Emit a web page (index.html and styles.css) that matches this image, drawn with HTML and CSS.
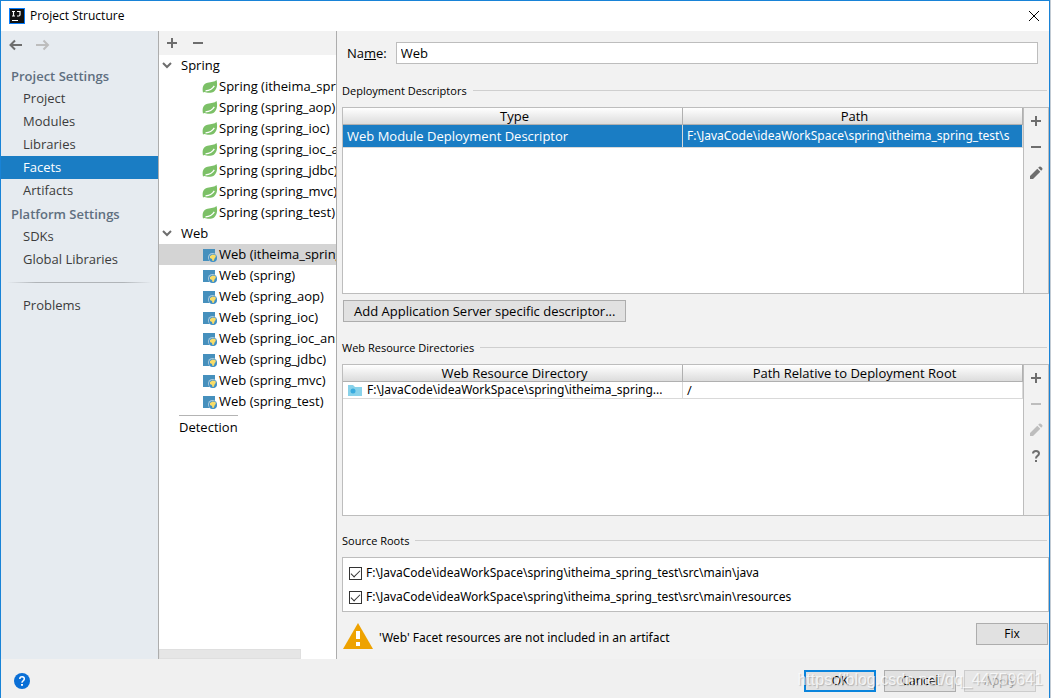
FILE: index.html
```html
<!DOCTYPE html>
<html lang="en">
<head>
<meta charset="utf-8">
<title>Project Structure</title>
<link rel="stylesheet" href="styles.css">
</head>
<body>
<svg class="defs" aria-hidden="true">
  <symbol id="leaf" viewBox="0 0 16 16"><path fill="#7cc067" d="M1 14.500C0 9.500 1 6 5.500 4.800 9.500 4 12.500 4 14.500 2c1 3.500 1 8.200-1.900 10.900C9.800 15.500 5 15 2.500 14z"/><path fill="none" stroke="#fff" stroke-width="1.300" d="M3.500 12.800c4-.2 6.800-1.700 8.800-5"/></symbol>
  <symbol id="web" viewBox="0 0 16 16"><path fill="#4690bd" d="M1 3h12v12H1z"/><circle cx="10.500" cy="11.500" r="4.500" fill="#a9c9dc"/><circle cx="11" cy="12" r="4" fill="#3f8fc6"/><path fill="#f8dc68" d="M8 10l2.500-1.500 3 .5.300 2-1 1-1 2.800-1.300.2-.5-2L8 12z"/></symbol>
  <symbol id="plus" viewBox="0 0 16 16"><path fill="currentColor" d="M7 3h2v4h4v2H9v4H7V9H3V7h4z"/></symbol>
  <symbol id="minus" viewBox="0 0 16 16"><path fill="currentColor" d="M3 7h10v2H3z"/></symbol>
  <symbol id="pencil" viewBox="0 0 16 16"><path fill="currentColor" d="M2 11L9.300 3.700l3 3L5 14H2zM10.200 2.800l1-1q1-.8 2 .1l1 1q.8 1-.1 1.900l-.9.900z"/></symbol>
  <symbol id="chevron" viewBox="0 0 16 16"><path fill="none" stroke="#6e6e6e" stroke-width="2" d="M4 6l4 4 4-4"/></symbol>
</svg>
<div class="window">
  <header class="titlebar">
    <svg class="logo" viewBox="0 0 16 16"><path fill="#087cfa" d="M0 0h16v16H0z"/><path fill="#111" d="M1 1h14v14H1z"/><path fill="none" stroke="#fff" stroke-width="1.200" d="M3 3.500h3M4.500 3.500v4M3 8h3M8 3.500h3v3.300q0 1.200-1.200 1.200H8M3 12.500h6"/></svg>
    <h1 class="title">Project Structure</h1>
    <button class="close" aria-label="Close"><svg viewBox="0 0 12 12"><path fill="none" stroke="#000" d="M1 1l10 10M11 1L1 11"/></svg></button>
  </header>
  <div class="body">
    <nav class="sidebar">
      <div class="history">
        <button class="icon-btn" aria-label="Back"><svg viewBox="0 0 16 16"><path fill="none" stroke="currentColor" stroke-width="2" d="M7 3.500L2.500 8 7 12.500M2 8h12"/></svg></button>
        <button class="icon-btn" aria-label="Forward" disabled><svg viewBox="0 0 16 16"><path fill="none" stroke="currentColor" stroke-width="2" d="M8.500 3.500L13 8l-4.500 4.500M13.500 8H1"/></svg></button>
      </div>
      <h2 class="nav-head">Project Settings</h2>
      <a class="nav-item" href="#">Project</a>
      <a class="nav-item" href="#">Modules</a>
      <a class="nav-item" href="#">Libraries</a>
      <a class="nav-item active" href="#">Facets</a>
      <a class="nav-item" href="#">Artifacts</a>
      <h2 class="nav-head">Platform Settings</h2>
      <a class="nav-item" href="#">SDKs</a>
      <a class="nav-item" href="#">Global Libraries</a>
      <hr class="nav-sep">
      <a class="nav-item" href="#">Problems</a>
    </nav>
    <section class="facets">
      <div class="tree-tools">
        <button class="icon-btn" aria-label="Add facet"><svg><use href="#plus"/></svg></button>
        <button class="icon-btn" aria-label="Remove facet"><svg><use href="#minus"/></svg></button>
      </div>
      <ul class="tree">
        <li class="branch"><svg><use href="#chevron"/></svg>Spring</li>
        <li class="leaf"><svg><use href="#leaf"/></svg>Spring (itheima_spring_test)</li>
        <li class="leaf"><svg><use href="#leaf"/></svg>Spring (spring_aop)</li>
        <li class="leaf"><svg><use href="#leaf"/></svg>Spring (spring_ioc)</li>
        <li class="leaf"><svg><use href="#leaf"/></svg>Spring (spring_ioc_anno)</li>
        <li class="leaf"><svg><use href="#leaf"/></svg>Spring (spring_jdbc)</li>
        <li class="leaf"><svg><use href="#leaf"/></svg>Spring (spring_mvc)</li>
        <li class="leaf"><svg><use href="#leaf"/></svg>Spring (spring_test)</li>
        <li class="branch"><svg><use href="#chevron"/></svg>Web</li>
        <li class="leaf selected"><svg><use href="#web"/></svg>Web (itheima_spring_test)</li>
        <li class="leaf"><svg><use href="#web"/></svg>Web (spring)</li>
        <li class="leaf"><svg><use href="#web"/></svg>Web (spring_aop)</li>
        <li class="leaf"><svg><use href="#web"/></svg>Web (spring_ioc)</li>
        <li class="leaf"><svg><use href="#web"/></svg>Web (spring_ioc_anno)</li>
        <li class="leaf"><svg><use href="#web"/></svg>Web (spring_jdbc)</li>
        <li class="leaf"><svg><use href="#web"/></svg>Web (spring_mvc)</li>
        <li class="leaf"><svg><use href="#web"/></svg>Web (spring_test)</li>
        <li class="detection"><span>Detection</span></li>
      </ul>
      <div class="scrollbar"></div>
    </section>
    <main class="details">
      <div class="name-row">
        <label for="name">Na<u>m</u>e:</label>
        <input class="name-input" id="name" type="text" value="Web">
      </div>

      <h3 class="group">Deployment Descriptors</h3>
      <div class="panel descriptors">
        <div class="table-area">
          <table>
            <thead><tr><th>Type</th><th>Path</th></tr></thead>
            <tbody><tr class="picked"><td>Web Module Deployment Descriptor</td><td class="path">F:\JavaCode\ideaWorkSpace\spring\itheima_spring_test\s</td></tr></tbody>
          </table>
        </div>
        <div class="side-tools">
          <button class="icon-btn" aria-label="Add"><svg><use href="#plus"/></svg></button>
          <button class="icon-btn" aria-label="Remove"><svg><use href="#minus"/></svg></button>
          <button class="icon-btn" aria-label="Edit"><svg><use href="#pencil"/></svg></button>
        </div>
      </div>
      <button class="btn add-descriptor">Add Application Server specific descriptor...</button>

      <h3 class="group">Web Resource Directories</h3>
      <div class="panel resources">
        <div class="table-area">
          <table>
            <thead><tr><th>Web Resource Directory</th><th>Path Relative to Deployment Root</th></tr></thead>
            <tbody><tr><td class="path"><div class="dir"><svg viewBox="0 0 16 16"><path fill="#88d2ea" d="M1 3h5l2 2h7v9H1z"/><circle cx="6" cy="9" r="2.500" fill="#39abdf"/></svg><span>F:\JavaCode\ideaWorkSpace\spring\itheima_spring...</span></div></td><td>/</td></tr></tbody>
          </table>
        </div>
        <div class="side-tools">
          <button class="icon-btn" aria-label="Add"><svg><use href="#plus"/></svg></button>
          <button class="icon-btn" aria-label="Remove" disabled><svg><use href="#minus"/></svg></button>
          <button class="icon-btn" aria-label="Edit" disabled><svg><use href="#pencil"/></svg></button>
          <button class="icon-btn" aria-label="Help"><svg viewBox="0 0 16 16"><path fill="none" stroke="currentColor" stroke-width="2" d="M5 5.500Q5 3 8 3t3 2.500q0 1.300-1.500 2.300T8 10.500"/><path fill="currentColor" d="M7 12h2v2H7z"/></svg></button>
        </div>
      </div>

      <h3 class="group">Source Roots</h3>
      <div class="roots">
        <label class="root"><input type="checkbox" checked>F:\JavaCode\ideaWorkSpace\spring\itheima_spring_test\src\main\java</label>
        <label class="root"><input type="checkbox" checked>F:\JavaCode\ideaWorkSpace\spring\itheima_spring_test\src\main\resources</label>
      </div>
      <div class="warning">
        <svg viewBox="0 0 30 26"><path fill="#eea200" d="M15 0l15 26H0z"/><path fill="#fff" d="M13 8h4v8h-4zM13 19h4v4h-4z"/></svg>
        <span class="warning-text">'Web' Facet resources are not included in an artifact</span>
        <button class="btn">Fix</button>
      </div>
    </main>
  </div>
  <footer class="footer">
    <button class="help" aria-label="Help"><svg viewBox="0 0 16 16"><circle cx="8" cy="8" r="8" fill="#0a6fd6"/><path fill="none" stroke="#fff" stroke-width="1.500" d="M5.800 6q0-2.200 2.300-2.200T10.300 6q0 1-1.200 1.800T8 9.800"/><path fill="#fff" d="M7 11h2v1.700H7z"/></svg></button>
    <button class="btn primary">OK</button>
    <button class="btn">Cancel</button>
    <button class="btn" disabled>Apply</button>
    <span class="watermark">https://blog.csdn.net/qq_44759641</span>
  </footer>
</div>
</body>
</html>
```
FILE: styles.css
```css
* { box-sizing: border-box; }
body {
  margin: 0;
  padding-right: 1px;
  background: #c3cbd3;
  font: 13px/20px "Open Sans", "Noto Sans", sans-serif;
  color: #000;
}
h1, h2, h3, ul { margin: 0; padding: 0; font-weight: normal; list-style: none; }
button, input { font: inherit; color: inherit; }
svg { flex: none; width: 16px; height: 16px; }
.defs { display: none; }

.window {
  display: flex;
  flex-direction: column;
  min-height: 100vh;
  border: 1px solid #1883d7;
  border-bottom: 0;
  background: #f0f0f0;
}
.titlebar {
  display: flex;
  align-items: center;
  gap: 5px;
  height: 30px;
  padding: 0 7px 0 8px;
  background: #fff;
}
.title { flex: 1; font-size: 12px; }
.close { display: flex; padding: 2px; border: 0; background: none; }
.close svg { width: 12px; height: 12px; }

.body { display: flex; flex: 1; }
.icon-btn {
  display: flex;
  padding: 0;
  border: 0;
  background: none;
  color: #6e6e6e;
}
.icon-btn:disabled { color: #bdbdbd; }

.sidebar {
  flex: none;
  width: 158px;
  border-right: 1px solid #adadad;
  background: #e6ebf0;
}
.history { display: flex; gap: 11px; padding: 6px 7px 11px; }
.nav-head {
  padding: 2px 0 0 10px;
  font-size: 13px;
  line-height: 21px;
  font-weight: 600;
  color: #5f6f7f;
}
.nav-item {
  display: block;
  padding-left: 22px;
  line-height: 23px;
  color: #3c3c3c;
  text-decoration: none;
}
.nav-item.active { background: #1a7dc4; color: #fff; }
.nav-sep {
  height: 1px;
  margin: 11px 6px;
  border: 0;
  background: linear-gradient(to right, transparent, #b0b4b8 20%, #b0b4b8 80%, transparent);
}

.facets {
  display: flex;
  flex-direction: column;
  flex: none;
  width: 178px;
  overflow: hidden;
  border-right: 1px solid #adadad;
  background: #fff;
}
.tree-tools {
  display: flex;
  gap: 10px;
  padding: 4px 5px;
  background: #f2f2f2;
}
.tree { flex: 1; white-space: nowrap; }
.branch, .leaf { display: flex; align-items: center; height: 21px; padding-bottom: 1px; }
.branch { gap: 6px; }
.leaf { gap: 1px; padding-left: 43px; }
.selected { background: #d4d4d4; }
.detection { padding: 3px 0 0 20px; }
.detection span { display: inline-block; padding-top: 1px; border-top: 1px solid #b4b4b4; }
.scrollbar { width: 80%; height: 10px; border: 1px solid #dfdfdf; background: #e6e6e6; }

.details {
  flex: 1;
  min-width: 0;
  padding: 11px 0 8px 5px;
  background: #f2f2f2;
}
.name-row {
  display: flex;
  align-items: center;
  gap: 9px;
  padding: 0 11px 2px 5px;
}
.name-input {
  flex: 1;
  min-width: 0;
  height: 22px;
  padding: 0 4px 1px;
  border: 1px solid #bdbdbd;
  background: #fff;
}
.group {
  display: flex;
  align-items: center;
  gap: 6px;
  padding: 16px 2px 8px 0;
  font-size: 11px;
  line-height: 17px;
}
.group::after { content: ""; flex: 1; height: 1px; background: #cfcfcf; }
.panel { display: flex; border: 1px solid #bdbdbd; }
.descriptors { min-height: 187px; }
.resources { min-height: 152px; }
.table-area { flex: 1; min-width: 0; background: #fff; }
.side-tools {
  display: flex;
  flex-direction: column;
  align-items: center;
  gap: 10px;
  width: 25px;
  padding-top: 5px;
  border-left: 1px solid #bdbdbd;
}
table { width: 100%; table-layout: fixed; border-collapse: separate; border-spacing: 0; }
th, td {
  overflow: hidden;
  padding: 0 0 0 4px;
  border-right: 1px solid #d9d9d9;
  border-bottom: 1px solid #d9d9d9;
  text-align: left;
  white-space: nowrap;
}
th {
  border-color: #b0b0b0;
  background: linear-gradient(#fff, #dcdcdc);
  font-weight: normal;
  line-height: 16px;
  text-align: center;
}
td { line-height: 16px; }
.picked td { background: #1a7dc4; color: #fff; line-height: 22px; }
.path, .root, .warning-text { font-family: "Noto Sans", "Open Sans", sans-serif; font-size: 12px; }
.dir { display: flex; gap: 4px; }
.dir span { overflow: hidden; text-overflow: ellipsis; }

.btn {
  min-width: 72px;
  height: 22px;
  padding: 0 13px;
  border: 1px solid #adadad;
  background: #e1e1e1;
  line-height: 18px;
  font-size: 12px;
}
.btn.primary { border: 2px solid #0a84dc; }
.btn:disabled { border-color: #ccc; background: #e6e6e6; color: #a0a0a0; }
.add-descriptor { display: block; margin: 6px 0 1px 1px; padding: 0 10px; font-size: 13px; }

.roots { padding: 3px 6px 2px; border: 1px solid #bdbdbd; background: #fff; }
.root {
  display: flex;
  align-items: center;
  gap: 4px;
  height: 24px;
}
.root input {
  appearance: none;
  display: flex;
  align-items: center;
  justify-content: center;
  width: 13px;
  height: 13px;
  margin: 0;
  border: 1px solid #333;
  background: #fff;
}
.root input:checked::before {
  content: "";
  width: 8px;
  height: 4px;
  margin-bottom: 2px;
  border: solid #333;
  border-width: 0 0 1px 1px;
  transform: rotate(-45deg);
}
.warning { display: flex; gap: 6px; padding: 11px 1px 0; }
.warning svg { width: 30px; height: 26px; }
.warning-text { flex: 1; padding-top: 5px; }

.footer {
  position: relative;
  display: flex;
  align-items: center;
  gap: 8px;
  height: 39px;
  padding: 4px 13px 0;
}
.help { display: flex; margin-right: auto; padding: 0; border: 0; background: none; }
.watermark {
  position: absolute;
  right: 6px;
  bottom: 8px;
  color: rgba(255, 255, 255, .75);
  font-family: "Liberation Sans", sans-serif;
  font-size: 16px;
  text-shadow: 1px 1px 1px rgba(0, 0, 0, .2);
  pointer-events: none;
}
```
